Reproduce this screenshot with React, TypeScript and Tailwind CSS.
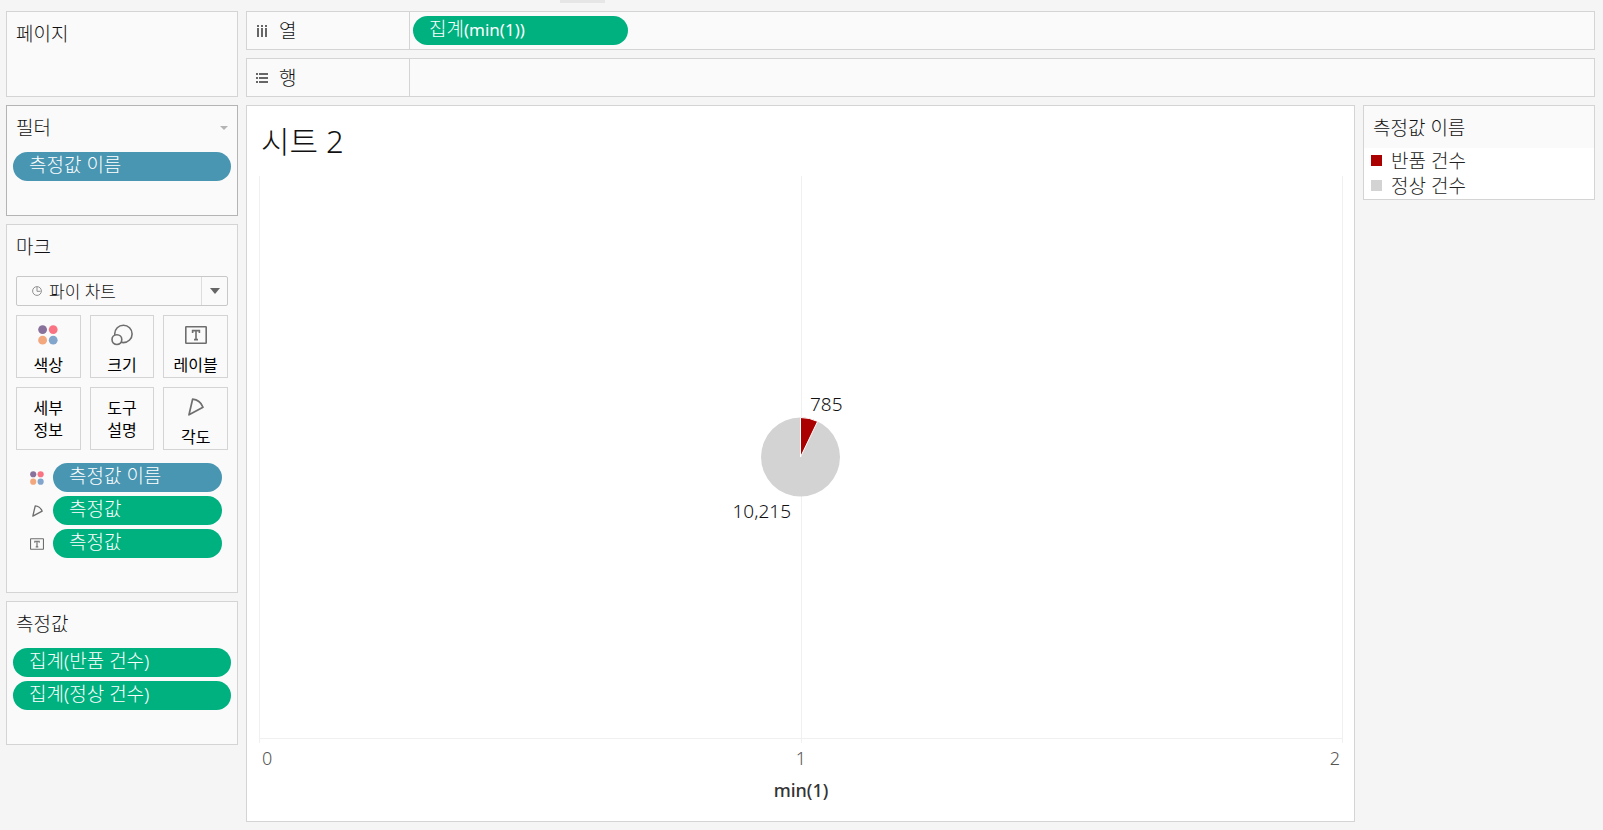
import React from 'react';

const FONT = "font-['Noto_Sans','Noto_Sans_CJK_KR',sans-serif]";

interface IconProps {
  className?: string;
  strokeWidth?: number;
}

const ColorIcon = ({ className = '' }: IconProps) => (
  <svg viewBox="0 0 20 20" className={className} aria-hidden="true">
    <circle cx="4.6" cy="4.6" r="4.4" fill="#88719a" />
    <circle cx="15.2" cy="4.6" r="4.4" fill="#fa7382" />
    <circle cx="4.6" cy="15.2" r="4.4" fill="#f3a77d" />
    <circle cx="15.2" cy="15.2" r="4.4" fill="#82a5cc" />
  </svg>
);

const SizeIcon = () => (
  <svg viewBox="0 0 22 22" className="w-[22px] h-[22px]" fill="none" stroke="#6e6e6e" strokeWidth="1.6" aria-hidden="true">
    <circle cx="12.4" cy="9.9" r="8.7" />
    <circle cx="5.9" cy="15.6" r="4.9" fill="#fafafa" />
  </svg>
);

const LabelIcon = ({ className = '', strokeWidth = 1.6 }: IconProps) => (
  <svg viewBox="0 0 22 18" className={className} fill="none" stroke="#6e6e6e" strokeWidth={strokeWidth} aria-hidden="true">
    <rect x="0.8" y="0.8" width="20.4" height="16.4" rx="0.5" />
    <path d="M7.6 7V4.6H14.4V7M11 4.6V13.6M9 13.6H13" />
  </svg>
);

const AngleIcon = ({ className = '', strokeWidth = 1.7 }: IconProps) => (
  <svg
    viewBox="0 0 16 18"
    className={className}
    fill="none"
    stroke="#6e6e6e"
    strokeWidth={strokeWidth}
    strokeLinejoin="round"
    aria-hidden="true"
  >
    <path d="M4.6 1.2L1 16.8L15 9.2C13.2 4.8 9.4 1.6 4.6 1.2Z" />
  </svg>
);

const PieIcon = () => (
  <svg viewBox="0 0 10 10" className="absolute left-[16px] top-[10px] w-[10px] h-[10px]" fill="none" stroke="#909090" aria-hidden="true">
    <circle cx="5" cy="5" r="4.4" />
    <path d="M5 1V5.3H8.5" />
  </svg>
);

const ColumnsIcon = () => (
  <svg viewBox="0 0 12 12" className="w-3 h-3" fill="#666666" aria-hidden="true">
    <path d="M1 0h2v2h-2zM5 0h2v2h-2zM9 0h2v2h-2zM1 3h2v9h-2zM5 3h2v9h-2zM9 3h2v9h-2z" />
  </svg>
);

const RowsIcon = () => (
  <svg viewBox="0 0 12 12" className="w-3 h-3" fill="#666666" aria-hidden="true">
    <path d="M0 1h2v2h-2zM0 5h2v2h-2zM0 9h2v2h-2zM3 1h9v2h-9zM3 5h9v2h-9zM3 9h9v2h-9z" />
  </svg>
);

interface PillProps {
  children: React.ReactNode;
  color?: 'blue' | 'green';
  className?: string;
}

const Pill = ({ children, color = 'green', className = '' }: PillProps) => (
  <button
    className={`h-[29px] rounded-full px-4 pb-[2px] text-left text-[19px] leading-[25px] font-light text-white whitespace-nowrap ${
      color === 'blue' ? 'bg-[#4996b2]' : 'bg-[#00b180]'
    } ${className}`}
  >
    {children}
  </button>
);

interface CardProps {
  title: string;
  children?: React.ReactNode;
  className?: string;
  action?: React.ReactNode;
}

const Card = ({ title, children, className = 'border-[#d4d4d4]', action }: CardProps) => (
  <section className={`border bg-[#fafafa] ${className}`}>
    <header className="flex h-[42px] items-center justify-between px-[9px] pt-[2px]">
      <h2 className="text-[19px] leading-6 font-light text-[#111111]">{title}</h2>
      {action}
    </header>
    {children}
  </section>
);

interface ShelfProps {
  label: string;
  icon: React.ReactNode;
  children?: React.ReactNode;
}

const Shelf = ({ label, icon, children }: ShelfProps) => (
  <section className="flex h-[39px] border border-[#d4d4d4] bg-[#fafafa]">
    <div className="flex w-[163px] items-center gap-[11px] border-r border-[#d4d4d4] pl-[9px]">
      {icon}
      <h2 className="text-[19px] leading-6 font-light text-[#111111]">{label}</h2>
    </div>
    <div className="flex flex-1 items-center px-[3px]">{children}</div>
  </section>
);

const markButtons = [
  { label: '색상', icon: <ColorIcon className="w-5 h-5" /> },
  { label: '크기', icon: <SizeIcon /> },
  { label: '레이블', icon: <LabelIcon className="w-[22px] h-[18px]" /> },
  { label: '세부 정보' },
  { label: '도구 설명' },
  { label: '각도', icon: <AngleIcon className="w-4 h-[18px]" /> },
];

const encodings: { label: string; color: 'blue' | 'green'; icon: React.ReactNode }[] = [
  { label: '측정값 이름', color: 'blue', icon: <ColorIcon className="w-[14px] h-[14px]" /> },
  { label: '측정값', color: 'green', icon: <AngleIcon className="w-[11px] h-3" strokeWidth={2} /> },
  { label: '측정값', color: 'green', icon: <LabelIcon className="w-[14px] h-3" strokeWidth={1.8} /> },
];

const legend = [
  { label: '반품 건수', swatch: 'bg-[#aa0000]' },
  { label: '정상 건수', swatch: 'bg-[#d3d3d3]' },
];

const Marks = () => (
  <Card title="마크" className="border-[#d4d4d4] pb-[34px]">
    <div className="px-[9px] pt-[9px]">
      <div className="relative">
        <PieIcon />
        <select
          aria-label="마크 유형"
          className="block h-[30px] w-full appearance-none rounded-[2px] border border-[#c8c8c8] bg-transparent pt-[2px] pl-8 text-[17px] font-light text-[#111111]"
        >
          <option>파이 차트</option>
        </select>
        <div className="pointer-events-none absolute inset-y-px right-px flex w-[26px] items-center justify-center border-l border-[#dddddd]">
          <svg viewBox="0 0 10 6" className="w-[10px] h-[6px]" fill="#666666" aria-hidden="true">
            <path d="M0 0H10L5 6Z" />
          </svg>
        </div>
      </div>

      <div className="mt-[9px] grid grid-cols-3 gap-[9px]">
        {markButtons.map((button) => (
          <button
            key={button.label}
            className={`flex h-[63px] flex-col items-center border border-[#d4d4d4] text-[16px] leading-[22px] text-black ${
              button.icon ? 'justify-end pb-px' : 'justify-center'
            }`}
          >
            {button.icon && <span className="mb-2 flex h-[22px] items-center">{button.icon}</span>}
            <span className={button.icon ? 'whitespace-nowrap' : 'w-9'}>{button.label}</span>
          </button>
        ))}
      </div>
    </div>

    {/* Encodings */}
    <ul className="mt-[13px] flex flex-col gap-1 pr-[15px] pl-[22px]">
      {encodings.map((encoding, i) => (
        <li key={i} className="flex items-center gap-2">
          <span className="flex w-4 justify-center">{encoding.icon}</span>
          <Pill color={encoding.color} className="flex-1">
            {encoding.label}
          </Pill>
        </li>
      ))}
    </ul>
  </Card>
);

const PieChart = () => (
  <svg
    viewBox="0 0 200 200"
    role="img"
    aria-label="반품 건수 785, 정상 건수 10,215"
    className="absolute top-1/2 left-1/2 h-[200px] w-[200px] -translate-x-1/2 -translate-y-1/2"
  >
    <circle cx="99.5" cy="100" r="39.5" fill="#d3d3d3" />
    <path d="M99.5 100V60.5A39.5 39.5 0 0 1 116.6 64.4Z" fill="#aa0000" stroke="#ffffff" />
    <g className="text-[19px] font-light" fill="#111111">
      <text x="109" y="54">785</text>
      <text x="90" y="161" textAnchor="end">10,215</text>
    </g>
  </svg>
);

const Sheet = () => (
  <main className="flex min-w-0 flex-1 flex-col border border-[#d4d4d4] bg-white pr-[11px] pb-[19px] pl-3">
    <h1 className="flex h-[70px] items-center px-[2px] text-[31px] leading-10 font-light text-[#111111]">시트 2</h1>
    <div className="relative grid flex-1 grid-cols-2 border-b border-[#f0f0f0]">
      <div className="border-l border-[#f0f0f0]" />
      <div className="border-x border-[#f0f0f0]" />
      <PieChart />
    </div>
    {/* Axis */}
    <div className="grid h-1 grid-cols-2">
      <div className="border-l border-[#f0f0f0]" />
      <div className="border-x border-[#f0f0f0]" />
    </div>
    <div className="mt-[3px] flex justify-between px-[3px] text-[18px] leading-6 font-light text-[#555555]">
      <span>0</span>
      <span>1</span>
      <span>2</span>
    </div>
    <p className="mt-2 text-center text-[18px] leading-6 font-medium text-[#333333]">min(1)</p>
  </main>
);

const Legend = () => (
  <Card title="측정값 이름" className="w-[232px] border-[#d4d4d4]">
    <ul className="bg-white pb-px">
      {legend.map((item) => (
        <li key={item.label} className="flex h-[25px] items-center gap-[9px] pl-[7px] text-[19px] leading-6 font-light text-[#222222]">
          <span className={`h-[11px] w-[11px] ${item.swatch}`} />
          {item.label}
        </li>
      ))}
    </ul>
  </Card>
);

export default function App() {
  return (
    <div lang="ko" className={`relative flex min-h-screen gap-2 bg-[#f5f5f5] pt-[11px] pr-2 pb-2 pl-[6px] ${FONT}`}>
      <div className="absolute top-0 left-[560px] h-[3px] w-[45px] bg-[#e6e6e6]" />

      <aside className="flex w-[232px] shrink-0 flex-col gap-2">
        <Card title="페이지" className="border-[#d4d4d4] pb-[42px]" />
        <Card
          title="필터"
          className="border-[#b4b4b4] pb-[34px]"
          action={
            <button aria-label="필터 메뉴" className="py-[2px] pl-[2px]">
              <svg viewBox="0 0 8 4" className="h-1 w-2" fill="#b4b4b4" aria-hidden="true">
                <path d="M0 0H8L4 4Z" />
              </svg>
            </button>
          }
        >
          <div className="flex px-[6px] pt-1">
            <Pill color="blue" className="flex-1">
              측정값 이름
            </Pill>
          </div>
        </Card>
        <Marks />
        <Card title="측정값" className="border-[#d4d4d4] pb-[34px]">
          <div className="flex flex-col gap-1 px-[6px] pt-1">
            <Pill>집계(반품 건수)</Pill>
            <Pill>집계(정상 건수)</Pill>
          </div>
        </Card>
      </aside>

      <div className="flex min-w-0 flex-1 flex-col gap-2">
        <Shelf label="열" icon={<ColumnsIcon />}>
          <Pill className="w-[215px]">
            집계<span className="text-[17px] font-normal">(min(1))</span>
          </Pill>
        </Shelf>
        <Shelf label="행" icon={<RowsIcon />} />
        <div className="flex flex-1 items-stretch gap-2">
          <Sheet />
          <aside className="shrink-0">
            <Legend />
          </aside>
        </div>
      </div>
    </div>
  );
}
